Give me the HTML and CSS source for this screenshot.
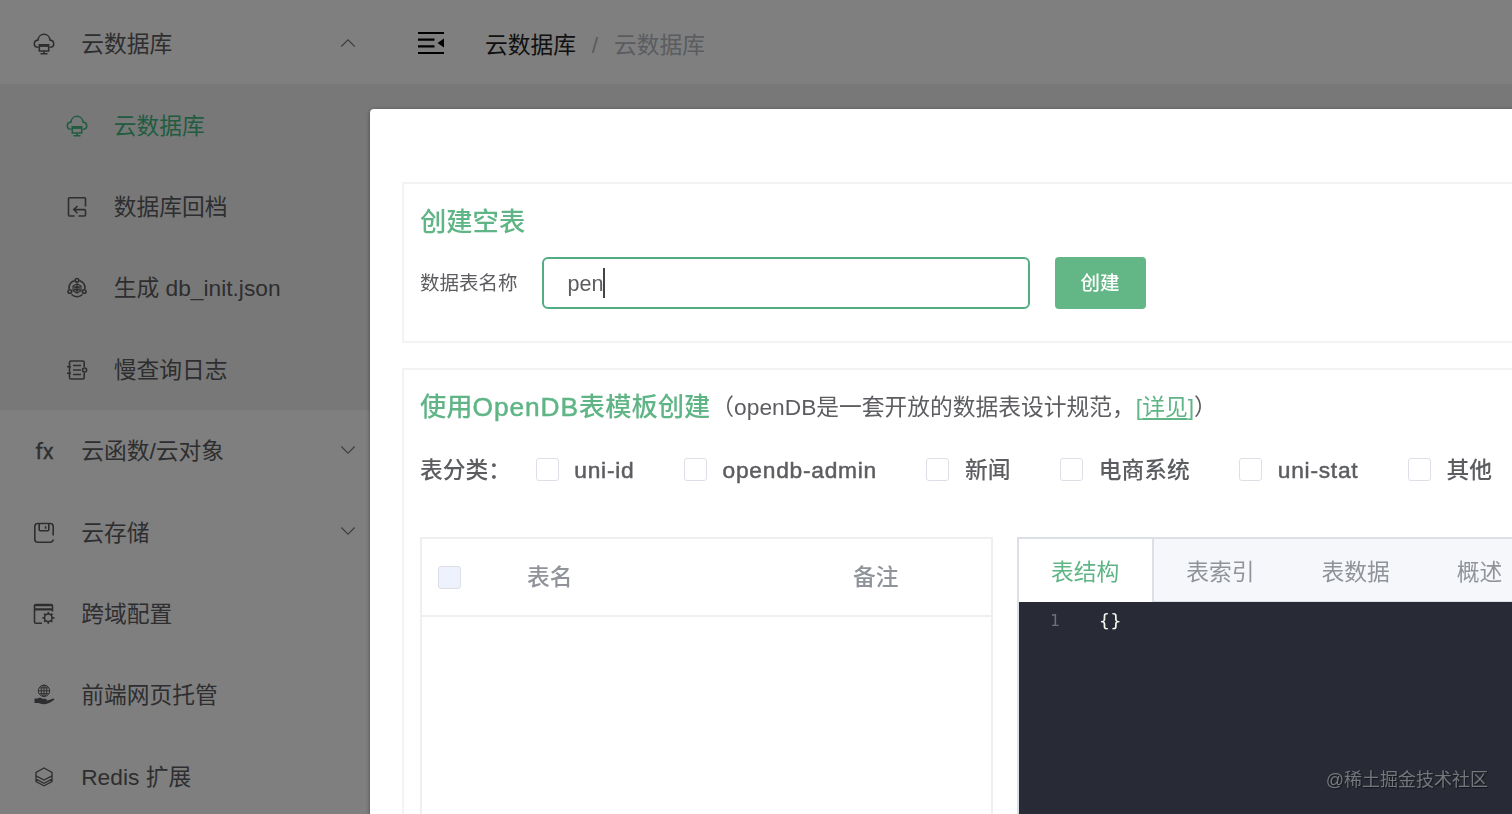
FILE: index.html
```
<!DOCTYPE html>
<html lang="zh-CN">
<head>
    <meta charset="UTF-8">
    <meta name="viewport" content="width=device-width, initial-scale=1.0">
    <title>云数据库</title>
    <link rel="stylesheet" href="styles.css">
</head>
<body>
    <svg class="sprite" width="0" height="0">
        <symbol id="icon-cloud-db" viewBox="0 0 22 22">
            <path d="M5.500 14.300H5C2.800 14.300 1.300 12.800 1.300 10.700 1.300 8.800 2.900 7.300 5 7.100 5.300 3.800 7.800 1.300 11 1.300s5.700 2.500 6 5.800c2.100.2 3.700 1.700 3.700 3.600 0 2.100-1.500 3.600-3.700 3.600h-.5"/>
            <path d="M6.300 11.800h9.400v6.200H6.300zM11 18v2.500M7.500 20.700h7"/>
            <path stroke-width="2.600" d="M6.200 12.600h9.600"/>
        </symbol>
        <symbol id="icon-chevron" viewBox="0 0 16 10">
            <path d="M1.300 1.500 8 8.200l6.700-6.700"/>
        </symbol>
    </svg>

    <div class="layout">
        <aside class="sidebar">
            <div class="menu-item">
                <svg class="icon"><use href="#icon-cloud-db"/></svg>
                <span>云数据库</span>
                <svg class="arrow arrow-up"><use href="#icon-chevron"/></svg>
            </div>
            <div class="submenu">
                <div class="menu-item active">
                    <svg class="icon"><use href="#icon-cloud-db"/></svg>
                    <span>云数据库</span>
                </div>
                <div class="menu-item">
                    <svg class="icon" viewBox="0 0 22 22">
                        <path d="M19.500 10.500V2.800a1 1 0 0 0-1-1h-15a1 1 0 0 0-1 1v16.200a1 1 0 0 0 1 1h5.200"/>
                        <path d="M11.500 10 7.800 13.600l3.700 3.600M8 13.600h10.500a1 1 0 0 1 1 1v4.400a1 1 0 0 1-1 1h-6"/>
                    </svg>
                    <span>数据库回档</span>
                </div>
                <div class="menu-item">
                    <svg class="icon" viewBox="0 0 22 22">
                        <path d="M8.600 3.600A8.300 8.300 0 0 0 3 12M13.400 3.600A8.300 8.300 0 0 1 19 12M5.500 17.500a8 8 0 0 0 11 0"/>
                        <circle cx="11" cy="3.300" r="1.800"/>
                        <circle cx="3.800" cy="14.500" r="1.800"/>
                        <circle cx="18.200" cy="14.500" r="1.800"/>
                        <path stroke-width="1.100" d="m11 6.800 4 2.300v4.700l-4 2.300-4-2.300V9.100zM7 9.100l8 4.700M15 9.100l-8 4.700M11 6.800v9.300"/>
                        <circle stroke-width="1" cx="11" cy="11.400" r="2.200"/>
                    </svg>
                    <span>生成 db_init.json</span>
                </div>
                <div class="menu-item">
                    <svg class="icon" viewBox="0 0 22 22">
                        <path d="M18.200 8V3.500a1.500 1.500 0 0 0-1.500-1.500H5A1.500 1.500 0 0 0 3.500 3.500v15A1.500 1.500 0 0 0 5 20h11.700a1.500 1.500 0 0 0 1.500-1.500v-4.700"/>
                        <path d="M7 6.500h8M7 11h8M7 15.500h8M1 7.800h4M1 14.200h4"/>
                        <circle cx="18.600" cy="11" r="2"/>
                    </svg>
                    <span>慢查询日志</span>
                </div>
            </div>
            <div class="menu-item">
                <span class="icon icon-fx">fx</span>
                <span>云函数/云对象</span>
                <svg class="arrow"><use href="#icon-chevron"/></svg>
            </div>
            <div class="menu-item">
                <svg class="icon" viewBox="0 0 22 22">
                    <path d="M20.200 13.500V4.500a3 3 0 0 0-3-3H4.800a3 3 0 0 0-3 3v12.700a3 3 0 0 0 3 3h12.400a3 3 0 0 0 3-2.700"/>
                    <path d="M6.200 1.800v6a1 1 0 0 0 1 1h7.600a1 1 0 0 0 1-1v-6M12.600 4.200v2.500"/>
                </svg>
                <span>云存储</span>
                <svg class="arrow"><use href="#icon-chevron"/></svg>
            </div>
            <div class="menu-item">
                <svg class="icon" viewBox="0 0 22 22">
                    <path d="M9 20.200H3a1.500 1.500 0 0 1-1.500-1.500V3A1.500 1.500 0 0 1 3 1.500h15A1.500 1.500 0 0 1 19.500 3v5.500"/>
                    <path stroke-width="2.200" d="M1.800 2.200h17.500M1.500 6.400h18"/>
                    <circle cx="15.300" cy="14.800" r="3.800"/>
                    <path stroke-width="1.800" d="M15.300 9v2M15.300 18.600v2.200M9.400 14.800h2M19.200 14.800h2.200M11.200 10.700l1.300 1.300M18.100 17.600l1.300 1.300M11.200 18.900l1.300-1.300M18.100 12l1.300-1.300"/>
                </svg>
                <span>跨域配置</span>
            </div>
            <div class="menu-item">
                <svg class="icon" viewBox="0 0 22 22">
                    <g stroke-width="1">
                        <circle cx="11" cy="6.800" r="5.700"/>
                        <ellipse cx="11" cy="6.800" rx="2.800" ry="5.700"/>
                        <path d="M5.300 6.800h11.400M6.300 3.900h9.400M6.300 9.700h9.400M11 1v11.600"/>
                    </g>
                    <path class="solid" d="M1.500 14.500h2.800c1.800-1 3.800-.8 5.200.3h3.300c.9 0 1.200 1.400.2 1.700l3.300-.4 3.700-1.600c1.100-.2 1.700.9.900 1.600-2.500 2-5 3.300-7.700 4-3.500.6-6-.5-8.500-1H1.500z"/>
                </svg>
                <span>前端网页托管</span>
            </div>
            <div class="menu-item">
                <svg class="icon" viewBox="0 0 22 22">
                    <g stroke-width="1.300">
                        <path d="m11 2 8 4.500v3.300l-8 4.200-8-4.200V6.500z"/>
                        <path d="M3 9.800v3.300l8 4.200 8-4.200V9.800M3 13.100v2.500l8 4.200 8-4.200v-2.500"/>
                    </g>
                </svg>
                <span>Redis 扩展</span>
            </div>
        </aside>

        <div class="page">
            <header class="topbar">
                <svg class="fold" viewBox="0 0 26 24">
                    <path d="M0 2h26M0 8.600h16.500M0 15.400h16.500M0 22h26"/>
                    <path class="solid" d="M26 7.500v9L19.500 12z"/>
                </svg>
                <nav class="breadcrumb">
                    <a>云数据库</a>
                    <span class="separator">/</span>
                    <span class="current">云数据库</span>
                </nav>
            </header>
        </div>
    </div>

    <div class="mask">
        <div class="dialog">
            <section class="card create-card">
                <h2>创建空表</h2>
                <div class="form-row">
                    <label>数据表名称</label>
                    <div class="input"><span>pen</span><i class="caret"></i></div>
                    <button class="btn">创建</button>
                </div>
            </section>

            <section class="card template-card">
                <div class="title-row">
                    <h2>使用<span class="latin">OpenDB</span>表模板创建</h2>
                    <p>（openDB是一套开放的数据表设计规范，<a>[<u>详见</u>]</a>）</p>
                </div>
                <div class="filters">
                    <span class="filter-label">表分类：</span>
                    <label class="check"><i class="box"></i><span class="latin">uni-id</span></label>
                    <label class="check"><i class="box"></i><span class="latin">opendb-admin</span></label>
                    <label class="check"><i class="box"></i><span>新闻</span></label>
                    <label class="check"><i class="box"></i><span>电商系统</span></label>
                    <label class="check"><i class="box"></i><span class="latin">uni-stat</span></label>
                    <label class="check"><i class="box"></i><span>其他</span></label>
                </div>
                <div class="panels">
                    <div class="table">
                        <div class="table-head">
                            <i class="box disabled"></i>
                            <span>表名</span>
                            <span>备注</span>
                        </div>
                    </div>
                    <div class="tabs">
                        <div class="tab-bar">
                            <div class="tab selected">表结构</div>
                            <div class="tab">表索引</div>
                            <div class="tab">表数据</div>
                            <div class="tab">概述</div>
                        </div>
                        <div class="editor">
                            <span class="line-no">1</span>
                            <code>{}</code>
                        </div>
                    </div>
                </div>
            </section>
        </div>
    </div>

    <div class="watermark">@稀土掘金技术社区</div>
</body>
</html>
```

FILE: styles.css
```
* {
    box-sizing: border-box;
}

body {
    margin: 0;
    height: 100vh;
    overflow: hidden;
    font-family: "Liberation Sans", "Noto Sans CJK SC", sans-serif;
    font-size: 22.75px;
    line-height: 32px;
    color: #5c5d60;
    background: #f1f1f1;
    white-space: nowrap;
}

h2,
p {
    margin: 0;
}

svg {
    fill: none;
    stroke: currentColor;
    stroke-width: 1.6;
    flex-shrink: 0;
}

svg .solid {
    fill: currentColor;
    stroke: none;
}

.sprite {
    position: absolute;
}

.layout {
    display: flex;
    height: 100vh;
}

/* sidebar */
.sidebar {
    width: 390px;
    flex-shrink: 0;
    padding-top: 3px;
    background: #fff;
}

.menu-item {
    display: flex;
    align-items: center;
    height: 81.4px;
    padding: 1px 34px 0 33px;
}

.menu-item .icon {
    width: 22px;
    height: 22px;
    margin-right: 26.2px;
}

.menu-item .icon-fx {
    padding-left: 1px;
    font-family: Roboto, sans-serif;
    font-size: 22px;
    line-height: 24px;
    text-align: center;
    -webkit-text-stroke: 0.3px currentColor;
}

.submenu {
    background: #f1f1f1;
}

.submenu .menu-item {
    padding-left: 65.5px;
}

.menu-item.active {
    color: #42b983;
}

.arrow {
    width: 16px;
    height: 10px;
    margin: -3px 0 0 auto;
    stroke-width: 1.1;
    color: #777a80;
}

.arrow-up {
    transform: rotate(180deg);
}

/* top bar */
.page {
    flex: 1;
}

.topbar {
    display: flex;
    align-items: center;
    height: 84px;
    padding: 5px 0 0 28px;
    background: #fff;
}

.fold {
    width: 26px;
    height: 24px;
    margin-top: -3px;
    color: #000;
    stroke-width: 2.2;
}

.breadcrumb {
    display: flex;
    margin-left: 41px;
    color: #222;
}

.separator {
    width: 38px;
    text-align: center;
    color: #b4b8c0;
}

.current {
    color: #b4b8c0;
}

/* dialog */
.mask {
    position: fixed;
    inset: 0;
    padding: 109px 0 0 369.5px;
    background: rgba(0, 0, 0, 0.5);
}

.dialog {
    width: 1300px;
    height: 900px;
    padding: 73px 32px 0 32.5px;
    background: #fff;
    border-radius: 4px;
    box-shadow: 0 1px 4px rgba(0, 0, 0, 0.45);
}

.card {
    padding: 0 16px;
    border: 2px solid #f3f3f4;
}

.create-card {
    height: 161px;
    margin-bottom: 25px;
}

.template-card {
    height: 700px;
}

h2 {
    font-size: 26.3px;
    font-weight: 500;
    line-height: 38px;
    color: #5fb585;
}

.create-card h2 {
    padding-top: 19px;
}

.form-row {
    display: flex;
    align-items: center;
    margin-top: 16px;
    font-size: 19.5px;
}

.input {
    display: flex;
    align-items: center;
    width: 488px;
    height: 52px;
    margin: 0 25px 0 24px;
    padding: 0 24px;
    border: 2px solid #52ad82;
    border-radius: 6px;
    font-size: 21.6px;
}

.input span {
    padding-top: 1px;
}

.caret {
    width: 2px;
    height: 30px;
    margin-left: -1px;
    background: #444;
}

.btn {
    width: 91px;
    height: 52px;
    padding: 0 0 3px;
    border: none;
    border-radius: 4px;
    background: #63b685;
    color: #fff;
    font-family: inherit;
    font-size: 19.5px;
    font-weight: 500;
}

.title-row {
    display: flex;
    align-items: center;
    padding-top: 18px;
}

.title-row h2 .latin {
    letter-spacing: 0.9px;
}

.title-row p {
    margin-left: 1px;
    padding-bottom: 1px;
}

.title-row a {
    margin-left: 1px;
    color: #5fb585;
}

.title-row u {
    text-underline-offset: 3px;
    text-decoration-thickness: 1.5px;
}

.latin {
    letter-spacing: 0.75px;
    -webkit-text-stroke: 0.5px currentColor;
}

.filters {
    display: flex;
    align-items: center;
    margin-top: 28px;
    font-weight: 500;
}

.filter-label {
    width: 115.5px;
}

.check {
    display: flex;
    align-items: center;
    margin-right: 49.3px;
}

.box {
    width: 23px;
    height: 23px;
    flex-shrink: 0;
    margin-right: 15.8px;
    border: 1.5px solid #dcdfe6;
    border-radius: 3px;
}

.filters .box {
    margin-top: -1px;
}

.box.disabled {
    margin: 0;
    background: #edf2fc;
}

.panels {
    display: flex;
    gap: 24px;
    margin-top: 51px;
    height: 500px;
}

.table {
    width: 573px;
    flex-shrink: 0;
    border: 2px solid #eeeff1;
}

.table-head {
    display: grid;
    grid-template-columns: 89px 326px 1fr;
    align-items: center;
    height: 78px;
    padding: 0 0 0 16px;
    border-bottom: 2px solid #eeeff1;
    color: #909399;
    font-weight: 500;
}

.tabs {
    width: 620px;
    flex-shrink: 0;
    border: 2px solid #dcdfe6;
}

.tab-bar {
    display: flex;
    height: 63px;
    background: #f5f7fa;
    border-bottom: 1px solid #dcdfe6;
}

.tab {
    padding: 17px 33px 0 32px;
    border-right: 2px solid transparent;
    color: #909399;
}

.tab.selected {
    height: 63px;
    background: #fff;
    border-color: #dcdfe6;
    color: #5fb585;
}

.editor {
    display: flex;
    height: 435px;
    padding-top: 3px;
    background: #282a36;
    font-family: "DejaVu Sans Mono", monospace;
    font-size: 18px;
}

.line-no {
    width: 80px;
    padding-left: 31px;
    font-size: 16px;
    color: #6d7078;
}

.editor code {
    font-family: inherit;
    letter-spacing: 0.6px;
    color: #f8f8f2;
}

.watermark {
    position: fixed;
    right: 24px;
    bottom: 18px;
    font-size: 18px;
    color: #75777d;
    text-shadow: 1px 1px 1px rgba(0, 0, 0, 0.5);
}
```
